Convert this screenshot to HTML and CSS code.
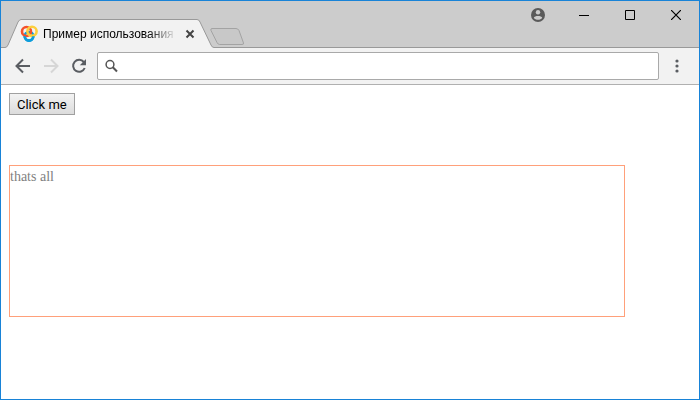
FILE: index.html
```html
<!DOCTYPE html>
<html lang="ru">

<head>
  <meta charset="UTF-8">
  <meta name="viewport" content="width=device-width, initial-scale=1.0">
  <title>Пример использования</title>
  <link rel="stylesheet" href="styles.css">
</head>

<body>
  <div class="window">
    <header class="titlebar">
      <div class="tab">
        <svg class="tab__shape" width="213" height="29" viewBox="0 0 213 29">
          <path d="M0 28.5H4Q6 28.5 7 26L17 3Q18.5 .5 20 .5H196Q198 .5 199 3L210 26Q211 28.5 213 28.5V29H0Z" fill="#f2f2f2" />
          <path d="M0 28.5H4Q6 28.5 7 26L17 3Q18.5 .5 20 .5H196Q198 .5 199 3L210 26Q211 28.5 213 28.5" fill="none" stroke="#999" />
        </svg>
        <svg class="tab__icon" width="18" height="18" viewBox="0 0 18 18" fill="none" stroke-width="2.6">
          <circle cx="9" cy="11.3" r="4.3" stroke="#0d9ddb" />
          <circle cx="6.5" cy="6.5" r="4.5" stroke="#f4512c" />
          <circle cx="12" cy="6.3" r="4.6" stroke="#fdcf3b" />
          <path d="M4.7 11.3A4.3 4.3 0 0 0 13.3 11.3" stroke="#0d9ddb" />
        </svg>
        <span class="tab__title">Пример использования</span>
        <button class="tab__close" type="button" aria-label="Закрыть вкладку">
          <svg width="10" height="10" viewBox="0 0 10 10"><path d="M1.5 1.5L8.5 8.5M8.5 1.5L1.5 8.5" stroke="#444" stroke-width="2" /></svg>
        </button>
      </div>
      <button class="newtab" type="button" aria-label="Новая вкладка">
        <svg width="35" height="18" viewBox="0 0 35 18"><path d="M2 .5H26Q28 .5 29 2.5L33.5 15Q34 16.5 32 16.5H9.5Q8 16.5 7 14.5L1 2.5Q.3 .5 2 .5Z" fill="#c8c8c8" stroke="#a3a3a3" /></svg>
      </button>
      <div class="controls">
        <button class="controls__btn" type="button" aria-label="Профиль">
          <svg width="14" height="14" viewBox="0 0 14 14">
            <circle cx="7" cy="7" r="7" fill="#5a5a5a" />
            <circle cx="7" cy="4.3" r="2.2" fill="#ccc" />
            <path d="M2.8 9.8C3.5 7.5 10.5 7.5 11.2 9.8C9.5 12.5 4.5 12.5 2.8 9.8Z" fill="#ccc" />
          </svg>
        </button>
        <button class="controls__btn" type="button" aria-label="Свернуть">
          <svg width="10" height="10" viewBox="0 0 10 10"><path d="M0 5.5H10" stroke="#000" /></svg>
        </button>
        <button class="controls__btn" type="button" aria-label="Развернуть">
          <svg width="10" height="10" viewBox="0 0 10 10"><path d="M.5 .5H9.5V9.5H.5Z" fill="none" stroke="#000" /></svg>
        </button>
        <button class="controls__btn" type="button" aria-label="Закрыть">
          <svg width="10" height="10" viewBox="0 0 10 10"><path d="M0 0L10 10M10 0L0 10" stroke="#000" stroke-width="1.2" /></svg>
        </button>
      </div>
    </header>

    <nav class="toolbar">
      <button class="toolbar__btn" type="button" aria-label="Назад">
        <svg width="16" height="16" viewBox="0 0 16 16"><path d="M15 8H2.5M8 1.5L1.5 8L8 14.5" fill="none" stroke="#5a5d62" stroke-width="2" /></svg>
      </button>
      <button class="toolbar__btn" type="button" aria-label="Вперёд" disabled>
        <svg width="16" height="16" viewBox="0 0 16 16"><path d="M1 8H13.5M8 1.5L14.5 8L8 14.5" fill="none" stroke="#d6d6d6" stroke-width="2" /></svg>
      </button>
      <button class="toolbar__btn" type="button" aria-label="Обновить">
        <svg width="16" height="16" viewBox="0 0 16 16">
          <path d="M12.8 4A6 6 0 1 0 13.7 10" fill="none" stroke="#5a5d62" stroke-width="2" />
          <path d="M15 1V7.2H8.8Z" fill="#5a5d62" />
        </svg>
      </button>
      <label class="omnibox">
        <svg width="14" height="14" viewBox="0 0 14 14" fill="none" stroke="#555">
          <circle cx="5" cy="5.5" r="3.9" stroke-width="1.5" />
          <path d="M7.8 8.3L12 12.5" stroke-width="2" />
        </svg>
        <input class="omnibox__input" type="text" aria-label="Адрес">
      </label>
      <button class="toolbar__btn" type="button" aria-label="Меню">
        <svg width="4" height="14" viewBox="0 0 4 14" fill="#5a5d62">
          <circle cx="2" cy="2" r="1.6" />
          <circle cx="2" cy="7" r="1.6" />
          <circle cx="2" cy="12" r="1.6" />
        </svg>
      </button>
    </nav>

    <main class="page">
      <button class="page__btn" type="button">Click me</button>
      <div class="block">thats all</div>
    </main>
  </div>
</body>

</html>
```
FILE: styles.css
```css
* {
  box-sizing: border-box;
}

body {
  margin: 0;
  font-family: "Liberation Sans", Arial, sans-serif;
}

button {
  padding: 0;
  border: none;
  background: none;
}

svg {
  display: block;
}

/* ============= window ============= */
.window {
  display: flex;
  flex-direction: column;
  min-height: 100vh;
  border: 1px solid #1883d7;
  background: #fff;
}

.titlebar {
  display: flex;
  align-items: flex-end;
  height: 47px;
  background: #ccc;
  box-shadow: inset 0 -1px #999;
}

/* ============= tab ============= */
.tab {
  position: relative;
  display: flex;
  align-items: center;
  gap: 5px;
  width: 213px;
  height: 29px;
  padding-left: 19px;
}

.tab__shape {
  position: absolute;
  top: 0;
  left: 0;
}

.tab__icon,
.tab__title,
.tab__close {
  position: relative;
}

.tab__title {
  width: 134px;
  overflow: hidden;
  white-space: nowrap;
  font: 12px/16px "Liberation Sans", Tahoma, sans-serif;
  color: #000;
  -webkit-mask-image: linear-gradient(to right, #000 105px, transparent);
  mask-image: linear-gradient(to right, #000 105px, transparent);
}

.tab__close {
  margin-left: 3px;
}

.newtab {
  height: 22px;
  margin-left: -4px;
}

/* ============= window controls ============= */
.controls {
  display: flex;
  align-self: flex-start;
  margin-left: auto;
}

.controls__btn {
  display: flex;
  justify-content: center;
  align-items: center;
  width: 46px;
  height: 28px;
}

/* ============= toolbar ============= */
.toolbar {
  display: flex;
  align-items: center;
  height: 37px;
  padding: 0 8px;
  border-bottom: 1px solid #b0b0b0;
  background: #f2f2f2;
}

.toolbar__btn {
  display: flex;
  justify-content: center;
  align-items: center;
  width: 28px;
  height: 28px;
}

.omnibox {
  display: flex;
  flex: 1;
  align-items: center;
  height: 28px;
  margin: 0 4px;
  padding-left: 7px;
  border: 1px solid #a9a9a9;
  border-radius: 2px;
  background: #fff;
}

.omnibox__input {
  flex: 1;
  min-width: 0;
  border: none;
  outline: none;
  background: none;
  font-size: 14px;
}

/* ============= page ============= */
.page {
  flex: 1;
  padding: 8px;
}

.page__btn {
  display: block;
  height: 22px;
  padding: 0 7px;
  border: 1px solid #a0a0a0;
  background: linear-gradient(#f3f3f3, #dcdcdc);
  font: 13px Roboto, Arial, sans-serif;
  color: #000;
}

.block {
  box-sizing: content-box;
  width: 90%;
  height: 150px;
  margin-top: 50px;
  border: 1px solid lightsalmon;
  font: 14px/22px "Liberation Serif", "Times New Roman", serif;
  color: #808080;
}
```
